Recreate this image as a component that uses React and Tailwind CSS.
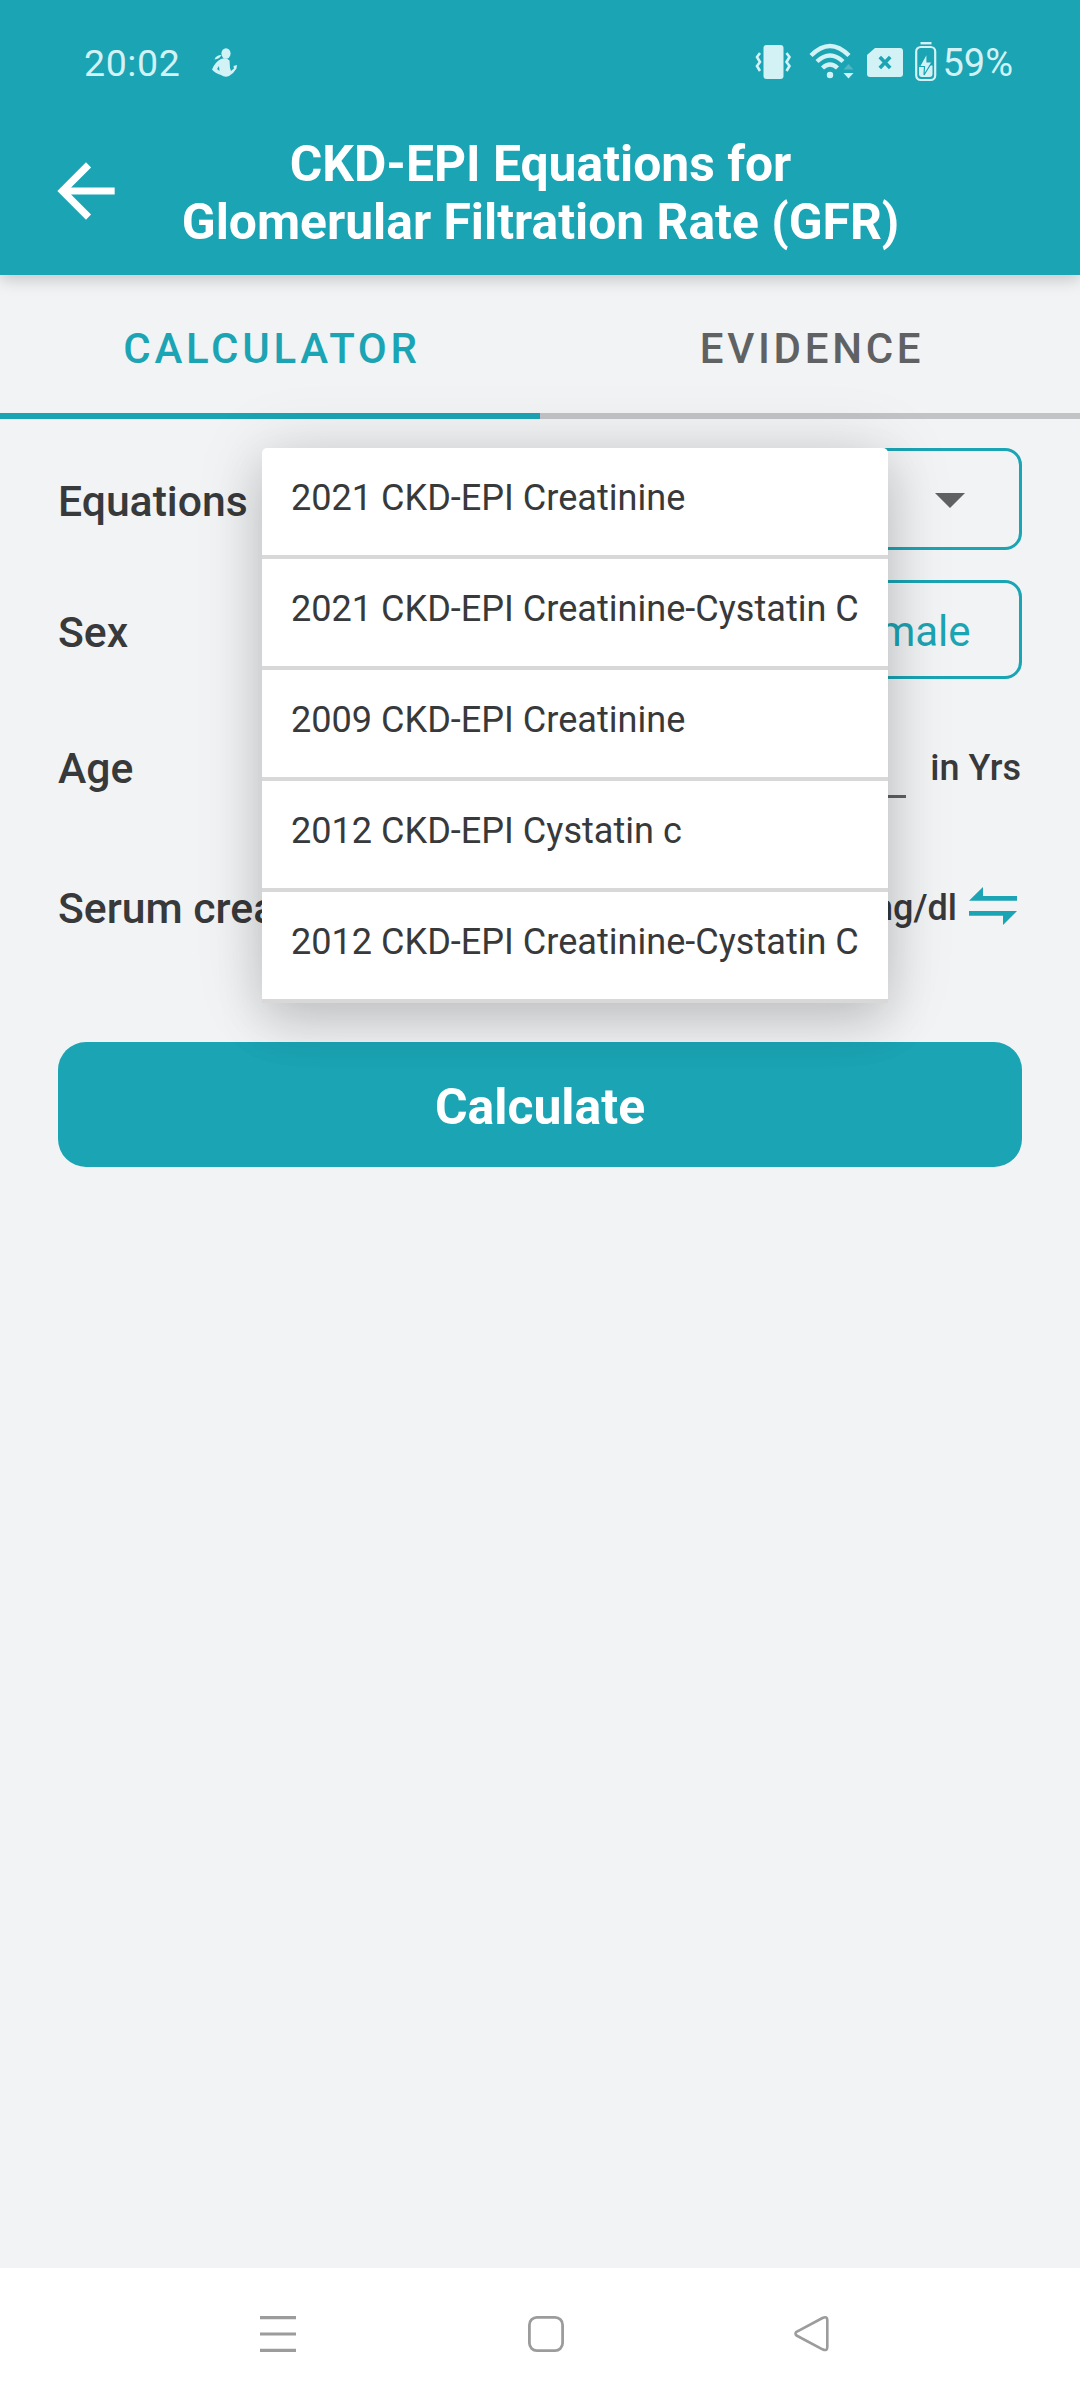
import { useState } from 'react';

const equations = [
  '2021 CKD-EPI Creatinine',
  '2021 CKD-EPI Creatinine-Cystatin C',
  '2009 CKD-EPI Creatinine',
  '2012 CKD-EPI Cystatin c',
  '2012 CKD-EPI Creatinine-Cystatin C',
];

const tabs = ['CALCULATOR', 'EVIDENCE'];

function StatusBar() {
  return (
    <div className="h-[124px] pl-[84px] pr-[67px] flex items-start justify-between text-[#d3f2f5]">
      <div className="flex items-start">
        <span className="mt-[41px] w-[128px] text-[37.5px] leading-[44px] tracking-[0.6px]">20:02</span>
        {/* fitness notification */}
        <svg className="mt-[48px]" width="26" height="30" viewBox="0 0 26 30" fill="currentColor">
          <ellipse cx="14" cy="5.5" rx="4.6" ry="5.2" />
          <path d="M2.5 11.5 Q4 7 9.5 7 Q7.5 11 2.5 11.5Z" />
          <path
            fillRule="evenodd"
            d="M9 11 Q14 9 17.5 12.5 L18 20 L19 23 L22 20.5 L21.5 18 L25 17 L24.5 20.5 Q22 25 17 28 Q13 30 9 27 Q3 25 0 21.5 Q3 14 9 11Z M7 18 L5 21 L7.5 23Z"
          />
        </svg>
      </div>
      <div className="flex items-start">
        {/* vibrate */}
        <svg className="mt-[44px]" width="38" height="36" viewBox="0 0 38 36" fill="none" stroke="currentColor" strokeWidth="2.6">
          <rect x="8.5" y="1" width="20" height="34" rx="3" fill="currentColor" stroke="none" />
          <path d="M5 9 L2 13 L5 18 L2 22 L5 27" />
          <path d="M31.5 9 L34.5 13 L31.5 18 L34.5 22 L31.5 27" />
        </svg>
        {/* wifi */}
        <svg className="mt-[43px] ml-[16px]" width="46" height="38" viewBox="0 0 46 38" fill="none" stroke="currentColor" strokeWidth="4.4">
          <path d="M2 12.5 Q21 -6.5 40 12.5" />
          <path d="M8 18.5 Q21 6.5 34 18.5" />
          <path d="M13.5 25 Q21 18 28.5 25" />
          <circle cx="21" cy="32" r="3.2" fill="currentColor" stroke="none" />
          <path d="M34.5 26.5 L39.5 21 L44.5 26.5Z" fill="#4cb8c5" stroke="none" />
          <path d="M34.5 30 L44.5 30 L39.5 35.5Z" fill="currentColor" stroke="none" />
        </svg>
        {/* sim missing */}
        <svg className="mt-[48px] ml-[12px]" width="36" height="29" viewBox="0 0 36 29">
          <path d="M8 0 H33 Q36 0 36 3 V26 Q36 29 33 29 H3 Q0 29 0 26 V7Z" fill="currentColor" />
          <path d="M12.8 9 L23.2 20 M23.2 9 L12.8 20" stroke="#1ba4b4" strokeWidth="3.6" />
        </svg>
        {/* battery */}
        <svg className="mt-[42px] ml-[12px]" width="22" height="40" viewBox="0 0 22 40" fill="none">
          <path d="M5.5 1.2 H16.5" stroke="currentColor" strokeWidth="2.4" />
          <rect x="1.2" y="5" width="19" height="33" rx="4.5" stroke="currentColor" strokeWidth="2.2" />
          <path d="M4 23.5 H17.5 V32 Q17.5 35 14.5 35 H7 Q4 35 4 32Z" fill="currentColor" />
          <path d="M12 11 L4.5 24.5 H9.5 L9 33 L17 20 H12Z" fill="currentColor" stroke="#1ba4b4" strokeWidth="1.2" />
        </svg>
        <span className="mt-[41px] ml-[5px] text-[38px] leading-[44px]">59%</span>
      </div>
    </div>
  );
}

function Header() {
  return (
    <header className="relative z-10 h-[275px] bg-[#1ba4b4] text-white shadow-[0_4px_16px_rgba(0,0,0,0.2)]">
      <StatusBar />
      <div className="flex items-start">
        <svg className="ml-[43px] mt-[24px] shrink-0" width="86" height="86" viewBox="0 0 24 24" fill="currentColor">
          <path d="M20 11H7.83l5.59-5.59L12 4l-8 8 8 8 1.41-1.41L7.83 13H20v-2z" />
        </svg>
        <h1 className="mt-[11px] w-[823px] text-center text-[49.8px] leading-[58px] font-bold">
          CKD-EPI Equations for<br />Glomerular Filtration Rate (GFR)
        </h1>
      </div>
    </header>
  );
}

function Tabs({ active, onChange }) {
  return (
    <div className="flex h-[144px]">
      {tabs.map((tab, i) => (
        <button
          key={tab}
          onClick={() => onChange(i)}
          className={`flex-1 border-b-[6px] pt-[9px] pl-[4px] text-[42px] font-medium tracking-[3.7px] ${
            active === i ? 'border-[#1ba4b4] text-[#1ba4b4]' : 'border-[#c2c3c7] text-[#606163]'
          }`}
        >
          {tab}
        </button>
      ))}
    </div>
  );
}

function EquationMenu({ onSelect }) {
  return (
    <ul className="absolute left-[262px] top-[29px] z-20 w-[626px] rounded-t-[5px] bg-white shadow-[0_20px_48px_rgba(0,0,0,0.14),0_2px_70px_rgba(0,0,0,0.13)]">
      {equations.map(eq => (
        <li
          key={eq}
          onClick={() => onSelect(eq)}
          className="h-[111px] border-b-4 border-[#d8d8d8] pl-[29px] pt-[29px] text-[36.1px] leading-[42px] font-normal text-[#37393b] whitespace-nowrap"
        >
          {eq}
        </li>
      ))}
    </ul>
  );
}

function Form() {
  const [equation, setEquation] = useState('');

  return (
    <main className="relative h-[1849px] px-[58px] pt-[29px] text-[42.7px] font-medium text-[#37393b]">
      <div className="flex h-[102px] items-center justify-between">
        <label className="pt-[4px] leading-[50px]">Equations</label>
        <div className="flex h-[102px] w-[700px] items-center justify-end rounded-[17px] border-3 border-[#1ba4b4] pr-[54px]">
          {equation}
          <svg className="mt-[2px]" width="30" height="15" viewBox="0 0 30 15" fill="#606163">
            <path d="M0 0H30L15 15Z" />
          </svg>
        </div>
      </div>

      <div className="mt-[30px] flex h-[99px] items-center justify-between">
        <label className="pt-[4px] leading-[50px]">Sex</label>
        <div className="flex h-[99px] w-[240px] items-center justify-center rounded-[17px] border-3 border-[#1ba4b4] pt-[3px] text-[42px] font-normal text-[#1ba4b4]">
          Female
        </div>
      </div>

      <div className="mt-[64px] flex h-[50px] items-start justify-between">
        <label className="leading-[50px]">Age</label>
        <div className="flex items-start pr-[1px]">
          <div className="mr-[24px] h-[55px] w-[200px] border-b-3 border-[#606163]" />
          <span className="pt-[2px] text-[36px] leading-[46px]">in Yrs</span>
        </div>
      </div>

      <div className="mt-[90px] flex h-[50px] items-start justify-between">
        <label className="leading-[50px]">Serum creatinine</label>
        <div className="flex items-start pr-[5px]">
          <span className="pt-[2px] text-[36px] leading-[46px]">mg/dl</span>
          <svg className="mt-[4px] ml-[12px]" width="48" height="38" viewBox="0 0 48 38" fill="#1ba4b4">
            <path d="M0 13.7 L14 0 V9 H48 V13.7Z" />
            <path d="M0 24 H48 L34 38 V28.7 H0Z" />
          </svg>
        </div>
      </div>

      <button className="mt-[109px] h-[125px] w-full rounded-[28px] bg-[#1ba4b4] pt-[5px] text-[49.9px] font-bold text-white">
        Calculate
      </button>

      <EquationMenu onSelect={setEquation} />
    </main>
  );
}

function NavBar() {
  return (
    <nav className="flex h-[132px] items-start justify-between bg-white pt-[48px] pr-[250px] pl-[260px]">
      <svg width="36" height="36" viewBox="0 0 36 36" stroke="#9c9c9c" strokeWidth="3.2">
        <path d="M0 1.6H36M0 18H36M0 34.4H36" />
      </svg>
      <svg className="ml-[2px]" width="36" height="36" viewBox="0 0 36 36" fill="none" stroke="#9c9c9c" strokeWidth="2.8">
        <rect x="1.4" y="1.4" width="33.2" height="33.2" rx="7.5" />
      </svg>
      <svg width="36" height="36" viewBox="0 0 36 36" fill="none" stroke="#9c9c9c" strokeWidth="2.6" strokeLinejoin="round">
        <path d="M2.5 15.8 L28.5 2 Q33.3 0 33.3 4 V31 Q33.3 35.5 28.5 33.3 L2.5 19.5 Q0.5 17.7 2.5 15.8Z" />
      </svg>
    </nav>
  );
}

export default function App() {
  const [active, setActive] = useState(0);

  return (
    <div className="h-[2400px] w-[1080px] overflow-hidden bg-[#f2f3f5] font-[Roboto,sans-serif]">
      <Header />
      <Tabs active={active} onChange={setActive} />
      <Form />
      <NavBar />
    </div>
  );
}
